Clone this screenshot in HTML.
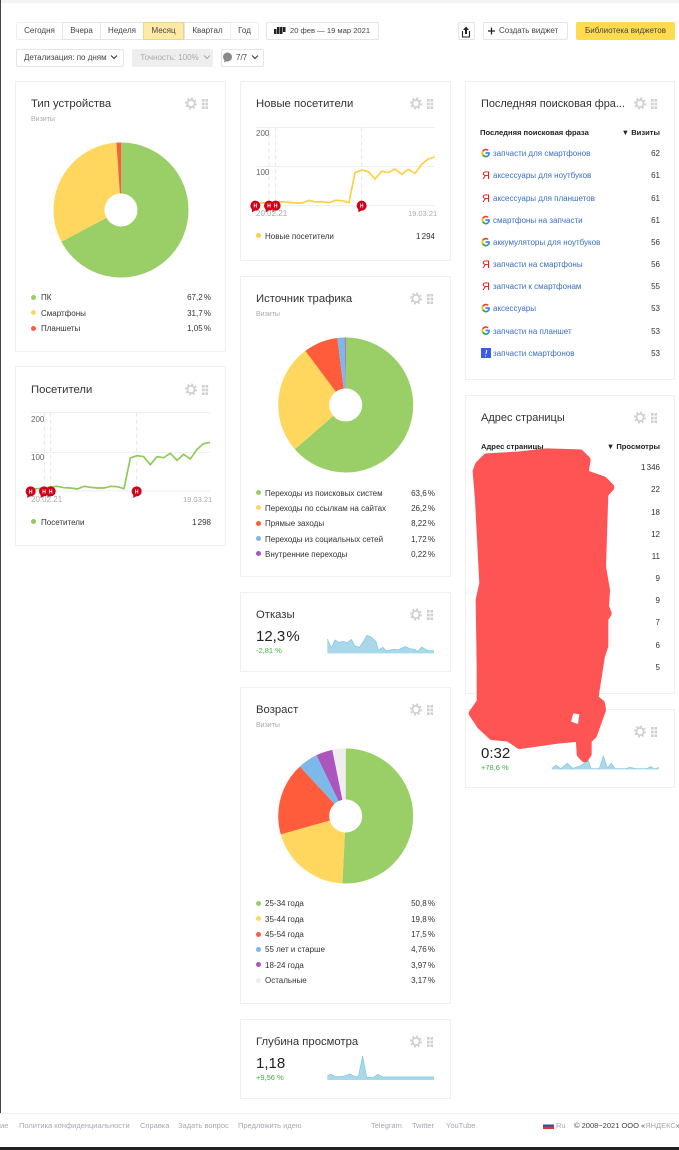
<!DOCTYPE html>
<html lang="ru"><head><meta charset="utf-8"><title>Метрика</title>
<style>
html,body{margin:0;padding:0;background:#fff}
body{position:relative;width:679px;height:1150px;overflow:hidden;font-family:"Liberation Sans",sans-serif;color:#333}
.a,.t,.r,.h,.s,.b{position:absolute;white-space:nowrap}
.t{font-size:8px;line-height:12px;color:#333;margin-top:1px}
.r{font-size:8px;line-height:12px;color:#333;text-align:right;width:60px;margin-top:1px;word-spacing:-1px}
.hd{font-size:7.6px;word-spacing:0}
.h{font-size:11.3px;line-height:16px;color:#333;margin-top:1px}
.s{font-size:7px;line-height:10px;color:#aaa;margin-top:1px}
.c{position:absolute;box-sizing:border-box;border:1px solid #f0f0f0;background:#fff}
.b{box-sizing:border-box;height:18px;border:1px solid #e5e5e5;border-radius:2px;font-size:8px;line-height:16px;text-align:center;color:#444;background:#fff}
.d{position:absolute;width:5px;height:5px;border-radius:50%}
.l{color:#3a6fc4}
.big{font-size:15px;line-height:20px;color:#222;position:absolute;white-space:nowrap;margin-top:1px;word-spacing:-3px}
.g{font-size:7.5px;line-height:10px;color:#3fae49;position:absolute;white-space:nowrap}
svg{position:absolute;left:0;top:0;overflow:visible}
.f{position:absolute;font-size:7.5px;line-height:12px;color:#a3a8b8;white-space:nowrap;top:1120px}
</style></head><body>
<div class="a" style="left:0;top:0;width:679px;height:3px;background:#f5f3f1"></div>
<div class="a" style="left:0;top:0;width:1px;height:1113px;background:#444"></div>

<!-- top controls -->
<div class="b" style="left:16px;top:22px;width:47px;border-color:#efefef;border-radius:2px 0 0 2px">Сегодня</div>
<div class="b" style="left:62px;top:22px;width:39px;border-radius:0">Вчера</div>
<div class="b" style="left:100px;top:22px;width:44px;border-radius:0">Неделя</div>
<div class="b" style="left:143px;top:22px;width:41px;border-radius:0;background:#fee9a5;border-color:#e8d58f">Месяц</div>
<div class="b" style="left:184px;top:22px;width:47px;border-radius:0">Квартал</div>
<div class="b" style="left:230px;top:22px;width:29px;border-color:#efefef;border-radius:0 2px 2px 0">Год</div>
<div class="b" style="left:266px;top:22px;width:113px;padding-left:23px;text-align:left;font-size:7.6px">20 фев — 19 мар 2021</div>
<svg width="679" height="80"><g fill="#222"><rect x="274" y="29" width="2.500" height="5"/><rect x="277" y="27" width="2.500" height="7"/><rect x="280" y="27" width="2.500" height="7"/><rect x="283" y="27" width="2.500" height="5"/></g></svg>
<div class="b" style="left:458px;top:22px;width:17px"></div>
<svg width="679" height="80"><path d="M466 26.500l-3 3.500h2v4h2v-4h2z" fill="#222"/><path d="M463 31.500h-.5v5.500h7v-5.500h-.5" fill="none" stroke="#222" stroke-width="1.100"/></svg>
<div class="b" style="left:483px;top:22px;width:85px;padding-left:15px;text-align:left">Создать виджет</div>
<svg width="679" height="80"><path d="M488 31h7M491.500 27.500v7" stroke="#222" stroke-width="1.300" fill="none"/></svg>
<div class="b" style="left:576px;top:22px;width:99px;background:#ffdb4d;border-color:#ffdb4d">Библиотека виджетов</div>
<div class="b" style="left:16px;top:49px;width:108px;padding-left:7px;text-align:left">Детализация: по дням</div>
<div class="b" style="left:132px;top:49px;width:81px;background:#eee;border-color:#eee;color:#aaa;padding-right:6px">Точность: 100%</div>
<div class="b" style="left:221px;top:49px;width:43px;padding-left:14px;text-align:left">7/7</div>
<svg width="679" height="80"><path d="M111 55.500l3 3 3-3M252 55.500l3 3 3-3" fill="none" stroke="#333"/><path d="M204 55.500l3 3 3-3" fill="none" stroke="#aaa"/><circle cx="227.500" cy="57" r="4.500" fill="#888"/><path d="M224.500 60l-.5 2.500 3-1.500z" fill="#888"/></svg>

<!-- cards -->
<div class="c" style="left:15px;top:81px;width:211px;height:271px"></div>
<div class="c" style="left:15px;top:366px;width:211px;height:180px"></div>
<div class="c" style="left:240px;top:81px;width:211px;height:180px"></div>
<div class="c" style="left:240px;top:276px;width:211px;height:301px"></div>
<div class="c" style="left:240px;top:592px;width:211px;height:80px"></div>
<div class="c" style="left:240px;top:687px;width:211px;height:317px"></div>
<div class="c" style="left:240px;top:1019px;width:211px;height:80px"></div>
<div class="c" style="left:465px;top:81px;width:210px;height:299px"></div>
<div class="c" style="left:465px;top:395px;width:210px;height:299px"></div>
<div class="c" style="left:465px;top:709px;width:210px;height:79px"></div>

<!-- titles -->
<div class="h" style="left:31px;top:95px">Тип устройства</div><div class="s" style="left:31px;top:114px">Визиты</div>
<div class="h" style="left:31px;top:381px">Посетители</div>
<div class="h" style="left:256px;top:95px">Новые посетители</div>
<div class="h" style="left:256px;top:290px">Источник трафика</div><div class="s" style="left:256px;top:309px">Визиты</div>
<div class="h" style="left:256px;top:606px">Отказы</div>
<div class="h" style="left:256px;top:701px">Возраст</div><div class="s" style="left:256px;top:720px">Визиты</div>
<div class="h" style="left:256px;top:1033px">Глубина просмотра</div>
<div class="h" style="left:481px;top:95px;font-size:10.9px">Последняя поисковая фра...</div>
<div class="h" style="left:481px;top:409px;font-size:11px">Адрес страницы</div>

<!-- gear + grip -->
<svg width="679" height="1150"><defs><g id="i"><circle cx="6" cy="5.500" r="3.600" fill="none" stroke="#cfcfcf" stroke-width="1.700"/><circle cx="6" cy="5.500" r="5.200" fill="none" stroke="#cfcfcf" stroke-width="1.600" stroke-dasharray="2 2.080"/><g fill="#cfcfcf"><rect x="17" y="1" width="2.600" height="2.600"/><rect x="20.500" y="1" width="2.600" height="2.600"/><rect x="17" y="4.700" width="2.600" height="2.600"/><rect x="20.500" y="4.700" width="2.600" height="2.600"/><rect x="17" y="8.400" width="2.600" height="2.600"/><rect x="20.500" y="8.400" width="2.600" height="2.600"/></g></g></defs>
<use href="#i" x="185" y="98"/><use href="#i" x="185" y="384"/><use href="#i" x="410" y="98"/><use href="#i" x="410" y="293"/><use href="#i" x="410" y="609"/><use href="#i" x="410" y="704"/><use href="#i" x="410" y="1036"/><use href="#i" x="634" y="98"/><use href="#i" x="634" y="412"/><use href="#i" x="634" y="726"/>

<!-- pies -->
<g fill="none" stroke-width="51">
<g transform="rotate(-90 121 210)">
<circle cx="121" cy="210" r="42" pathLength="100" stroke="#99cf66" stroke-dasharray="67.2 100"/>
<circle cx="121" cy="210" r="42" pathLength="100" stroke="#ffd75e" stroke-dasharray="31.7 100" stroke-dashoffset="-67.2"/>
<circle cx="121" cy="210" r="42" pathLength="100" stroke="#ff5c3c" stroke-dasharray="1.1 100" stroke-dashoffset="-98.9"/>
</g>
<g transform="rotate(-90 345.700 405)">
<circle cx="345.700" cy="405" r="42" pathLength="100" stroke="#99cf66" stroke-dasharray="63.6 100"/>
<circle cx="345.700" cy="405" r="42" pathLength="100" stroke="#ffd75e" stroke-dasharray="26.2 100" stroke-dashoffset="-63.6"/>
<circle cx="345.700" cy="405" r="42" pathLength="100" stroke="#ff5c3c" stroke-dasharray="8.22 100" stroke-dashoffset="-89.8"/>
<circle cx="345.700" cy="405" r="42" pathLength="100" stroke="#7cb9ea" stroke-dasharray="1.72 100" stroke-dashoffset="-98.02"/>
<circle cx="345.700" cy="405" r="42" pathLength="100" stroke="#ab55bd" stroke-dasharray="0.26 100" stroke-dashoffset="-99.74"/>
</g>
<g transform="rotate(-90 345.700 816)">
<circle cx="345.700" cy="816" r="42" pathLength="100" stroke="#99cf66" stroke-dasharray="50.8 100"/>
<circle cx="345.700" cy="816" r="42" pathLength="100" stroke="#ffd75e" stroke-dasharray="19.8 100" stroke-dashoffset="-50.8"/>
<circle cx="345.700" cy="816" r="42" pathLength="100" stroke="#ff5c3c" stroke-dasharray="17.5 100" stroke-dashoffset="-70.6"/>
<circle cx="345.700" cy="816" r="42" pathLength="100" stroke="#7cb9ea" stroke-dasharray="4.76 100" stroke-dashoffset="-88.1"/>
<circle cx="345.700" cy="816" r="42" pathLength="100" stroke="#ab55bd" stroke-dasharray="3.97 100" stroke-dashoffset="-92.86"/>
<circle cx="345.700" cy="816" r="42" pathLength="100" stroke="#eeeeee" stroke-dasharray="3.17 100" stroke-dashoffset="-96.83"/>
</g>
</g>

<!-- new visitors chart -->
<g transform="translate(240 110) scale(.33333)">
<path d="M47 52H585M47 170H585M47 287H585" stroke="#eee" stroke-width="3" fill="none"/>
<path d="M87 52V287M107 52V287M365 52V287" stroke="#e6e6e6" stroke-width="3" stroke-dasharray="12 9" fill="none"/>
<path d="M47 282L67 279 87 277 107 275 127 275 147 277 167 279 187 279 207 271 227 276 247 275 267 278 287 271 307 272 327 278 345 188 365 180 385 185 405 207 425 184 445 188 465 177 485 193 505 178 525 190 545 163 565 147 584 141" stroke="#ffcf40" stroke-width="5" fill="none"/>
<g fill="#d0021b"><circle cx="46" cy="287" r="15"/><circle cx="87" cy="287" r="15"/><circle cx="107" cy="287" r="15"/><circle cx="365" cy="287" r="15"/><path d="M36 297l0 10 10-6zM77 297l0 10 10-6zM97 297l0 10 10-6zM355 297l0 10 10-6z"/></g>
</g>
<!-- visitors chart -->
<g transform="translate(10 400) scale(.33333)">
<path d="M62 38H600M62 157H600M62 273H600" stroke="#eee" stroke-width="3" fill="none"/>
<path d="M103 38V273M122 38V273M380 38V273" stroke="#e6e6e6" stroke-width="3" stroke-dasharray="12 9" fill="none"/>
<path d="M62 268L82 266 103 265 122 261 142 259 162 263 182 264 202 267 222 259 242 262 262 264 282 264 302 259 322 260 342 266 361 174 381 167 401 170 421 194 441 170 461 173 481 160 501 181 521 163 541 177 561 148 581 131 600 127" stroke="#8fca58" stroke-width="5" fill="none"/>
<g fill="#d0021b"><circle cx="62" cy="274" r="15"/><circle cx="102" cy="274" r="15"/><circle cx="122" cy="274" r="15"/><circle cx="380" cy="274" r="15"/><path d="M52 284l0 10 10-6zM92 284l0 10 10-6zM112 284l0 10 10-6zM370 284l0 10 10-6z"/></g>
</g>
<!-- sparklines -->
<g transform="translate(240 590) scale(.33333)"><path d="M262 190V147L274 173 285 150 297 157 310 154 322 158 334 148 345 168 358 172 370 155 381 136 395 142 408 155 415 180 428 172 440 183 458 178 475 179 496 170 510 176 525 178 532 185 545 171 560 180 570 182 582 182V190Z" fill="#a8d8ea"/><path d="M262 147L274 173 285 150 297 157 310 154 322 158 334 148 345 168 358 172 370 155 381 136 395 142 408 155 415 180 428 172 440 183 458 178 475 179 496 170 510 176 525 178 532 185 545 171 560 180 570 182 582 182" fill="none" stroke="#7fc6e0" stroke-width="2"/></g>
<g transform="translate(240 1020) scale(.33333)"><path d="M262 180V168L272 162 285 170 310 169 330 162 345 170 355 170 368 108 380 172 400 172 413 163 430 171 582 171V180Z" fill="#a8d8ea"/><path d="M262 168L272 162 285 170 310 169 330 162 345 170 355 170 368 108 380 172 400 172 413 163 430 171 582 171" fill="none" stroke="#7fc6e0" stroke-width="2"/></g>
<g transform="translate(460 400) scale(.33333)"><path d="M276 1108V1105L288 1095 302 1106 322 1090 338 1105 360 1098 385 1082 393 1106 418 1106 430 1068 442 1104 454 1090 465 1106 495 1106 510 1102 530 1106 560 1106 572 1100 585 1107 596 1102V1108Z" fill="#a8d8ea"/><path d="M276 1105L288 1095 302 1106 322 1090 338 1105 360 1098 385 1082 393 1106 418 1106 430 1068 442 1104 454 1090 465 1106 495 1106 510 1102 530 1106 560 1106 572 1100 585 1107 596 1102" fill="none" stroke="#7fc6e0" stroke-width="2"/></g>
<g fill="#fff" font-family="Liberation Sans" font-size="5" font-weight="bold" text-anchor="middle"><text x="255.300" y="207.500">Н</text><text x="269" y="207.500">Н</text><text x="275.700" y="207.500">Н</text><text x="361.700" y="207.500">Н</text><text x="30.700" y="493.300">Н</text><text x="44" y="493.300">Н</text><text x="50.700" y="493.300">Н</text><text x="136.700" y="493.300">Н</text></g>
</svg>

<!-- chart labels -->
<div class="t" style="left:256px;top:127px;color:#666">200</div><div class="t" style="left:256px;top:166px;color:#666">100</div>
<div class="t" style="left:256px;top:207px;color:#aaa">20.02.21</div><div class="t" style="left:408px;top:207px;color:#aaa;font-size:7.5px">19.03.21</div>
<div class="t" style="left:31px;top:413px;color:#666">200</div><div class="t" style="left:31px;top:451px;color:#666">100</div>
<div class="t" style="left:31px;top:493px;color:#aaa">20.02.21</div><div class="t" style="left:183px;top:493px;color:#aaa;font-size:7.5px">19.03.21</div>

<!-- legends -->
<div class="d" style="left:31px;top:295px;background:#99cf66"></div><div class="t" style="left:41px;top:291px">ПК</div><div class="r" style="left:151px;top:291px">67,2 %</div>
<div class="d" style="left:31px;top:310px;background:#ffd75e"></div><div class="t" style="left:41px;top:307px">Смартфоны</div><div class="r" style="left:151px;top:307px">31,7 %</div>
<div class="d" style="left:31px;top:326px;background:#ff5c3c"></div><div class="t" style="left:41px;top:322px">Планшеты</div><div class="r" style="left:151px;top:322px">1,05 %</div>
<div class="d" style="left:31px;top:519px;background:#8fca58"></div><div class="t" style="left:41px;top:516px">Посетители</div><div class="r" style="left:151px;top:516px">1 298</div>
<div class="d" style="left:256px;top:233px;background:#ffcf40"></div><div class="t" style="left:265px;top:230px">Новые посетители</div><div class="r" style="left:375px;top:230px">1 294</div>

<div class="d" style="left:256px;top:490px;background:#99cf66"></div><div class="t" style="left:265px;top:487px">Переходы из поисковых систем</div><div class="r" style="left:375px;top:487px">63,6 %</div>
<div class="d" style="left:256px;top:505px;background:#ffd75e"></div><div class="t" style="left:265px;top:502px">Переходы по ссылкам на сайтах</div><div class="r" style="left:375px;top:502px">26,2 %</div>
<div class="d" style="left:256px;top:521px;background:#ff5c3c"></div><div class="t" style="left:265px;top:517px">Прямые заходы</div><div class="r" style="left:375px;top:517px">8,22 %</div>
<div class="d" style="left:256px;top:536px;background:#7cb9ea"></div><div class="t" style="left:265px;top:533px">Переходы из социальных сетей</div><div class="r" style="left:375px;top:533px">1,72 %</div>
<div class="d" style="left:256px;top:551px;background:#ab55bd"></div><div class="t" style="left:265px;top:548px">Внутренние переходы</div><div class="r" style="left:375px;top:548px">0,22 %</div>

<div class="d" style="left:256px;top:901px;background:#99cf66"></div><div class="t" style="left:265px;top:897px">25-34 года</div><div class="r" style="left:375px;top:897px">50,8 %</div>
<div class="d" style="left:256px;top:916px;background:#ffd75e"></div><div class="t" style="left:265px;top:913px">35-44 года</div><div class="r" style="left:375px;top:913px">19,8 %</div>
<div class="d" style="left:256px;top:932px;background:#ff5c3c"></div><div class="t" style="left:265px;top:928px">45-54 года</div><div class="r" style="left:375px;top:928px">17,5 %</div>
<div class="d" style="left:256px;top:947px;background:#7cb9ea"></div><div class="t" style="left:265px;top:943px">55 лет и старше</div><div class="r" style="left:375px;top:943px">4,76 %</div>
<div class="d" style="left:256px;top:962px;background:#ab55bd"></div><div class="t" style="left:265px;top:959px">18-24 года</div><div class="r" style="left:375px;top:959px">3,97 %</div>
<div class="d" style="left:256px;top:978px;background:#eee"></div><div class="t" style="left:265px;top:974px">Остальные</div><div class="r" style="left:375px;top:974px">3,17 %</div>

<!-- metrics -->
<div class="big" style="left:256px;top:626px">12,3 %</div><div class="g" style="left:256px;top:646px">-2,81 %</div>
<div class="big" style="left:256px;top:1053px">1,18</div><div class="g" style="left:256px;top:1073px">+9,56 %</div>
<div class="big" style="left:481px;top:743px">0:32</div><div class="g" style="left:481px;top:763px">+78,6 %</div>

<!-- table 1 -->
<div class="t hd" style="left:480px;top:126px;font-weight:bold;color:#222">Последняя поисковая фраза</div><div class="r hd" style="left:600px;top:126px;font-weight:bold;color:#222">▼ Визиты</div>
<svg width="679" height="1150"><defs><g id="G" fill="none" stroke-width="1.700"><path d="M7 1.800A3.500 3.500 0 0 0 1.800 2.800" stroke="#ea4335"/><path d="M1.800 2.800A3.500 3.500 0 0 0 1.800 6.200" stroke="#fbbc05"/><path d="M1.800 6.200A3.500 3.500 0 0 0 7 7.400" stroke="#34a853"/><path d="M7 7.400A3.500 3.500 0 0 0 8 4.500H4.500" stroke="#4285f4"/></g></defs>
<use href="#G" x="481" y="148.500"/><use href="#G" x="481" y="215.500"/><use href="#G" x="481" y="237.500"/><use href="#G" x="481" y="303.500"/><use href="#G" x="481" y="326"/>
<rect x="481" y="348" width="10" height="10" fill="#3b5bf0"/><path d="M486.700 350l-.8 4M485.600 355.500v1" stroke="#fff" stroke-width="1" fill="none"/></svg>
<div class="t" style="left:482px;top:169px;color:#f01a0a;font-size:11px">Я</div><div class="t" style="left:482px;top:192px;color:#f01a0a;font-size:11px">Я</div><div class="t" style="left:482px;top:258px;color:#f01a0a;font-size:11px">Я</div><div class="t" style="left:482px;top:280px;color:#f01a0a;font-size:11px">Я</div>
<div class="t l" style="left:493px;top:147px">запчасти для смартфонов</div><div class="r" style="left:600px;top:147px">62</div>
<div class="t l" style="left:493px;top:169px">аксессуары для ноутбуков</div><div class="r" style="left:600px;top:169px">61</div>
<div class="t l" style="left:493px;top:192px">аксессуары для планшетов</div><div class="r" style="left:600px;top:192px">61</div>
<div class="t l" style="left:493px;top:214px">смартфоны на запчасти</div><div class="r" style="left:600px;top:214px">61</div>
<div class="t l" style="left:493px;top:236px">аккумуляторы для ноутбуков</div><div class="r" style="left:600px;top:236px">56</div>
<div class="t l" style="left:493px;top:258px">запчасти на смартфоны</div><div class="r" style="left:600px;top:258px">56</div>
<div class="t l" style="left:493px;top:280px">запчасти к смартфонам</div><div class="r" style="left:600px;top:280px">55</div>
<div class="t l" style="left:493px;top:302px">аксессуары</div><div class="r" style="left:600px;top:302px">53</div>
<div class="t l" style="left:493px;top:325px">запчасти на планшет</div><div class="r" style="left:600px;top:325px">53</div>
<div class="t l" style="left:493px;top:347px">запчасти смартфонов</div><div class="r" style="left:600px;top:347px">53</div>

<!-- table 2 -->
<div class="t hd" style="left:481px;top:440px;font-weight:bold;color:#222">Адрес страницы</div><div class="r hd" style="left:600px;top:440px;font-weight:bold;color:#222">▼ Просмотры</div>
<div class="r" style="left:600px;top:461px">1 346</div><div class="r" style="left:600px;top:483px">22</div><div class="r" style="left:600px;top:506px">18</div><div class="r" style="left:600px;top:528px">12</div><div class="r" style="left:600px;top:550px">11</div><div class="r" style="left:600px;top:572px">9</div><div class="r" style="left:600px;top:594px">9</div><div class="r" style="left:600px;top:616px">7</div><div class="r" style="left:600px;top:639px">6</div><div class="r" style="left:600px;top:661px">5</div>

<!-- scribble -->
<svg width="679" height="1150"><g transform="translate(460 400) scale(.33333)"><path fill="#fe5454" stroke="#fe5454" stroke-width="24" stroke-linejoin="round" d="M57 195L80 172 170 167 260 157 360 160 380 180 373 221 430 241 451 262 433 282 426 500 438 570 435 620 443 640 433 656 433 738 423 768 403 895 423 911 426 930 399 1005 383 1020 383 1062 374 1075 362 1062 359 1013 300 1018 179 1035 146 1013 96 1008 62 976 38 940 62 906 62 800 59 600 70 550 57 300 50 214Z"/><path fill="#fff" d="M340 940L358 943 354 972 333 965Z"/></g></svg>

<!-- footer -->
<div class="a" style="left:0;top:1113px;width:679px;height:1px;background:#eee"></div>
<div class="f" style="left:0">ие</div>
<div class="f" style="left:19px">Политика конфиденциальности</div>
<div class="f" style="left:140px">Справка</div>
<div class="f" style="left:178px">Задать вопрос</div>
<div class="f" style="left:238px">Предложить идею</div>
<div class="f" style="left:371px">Telegram</div>
<div class="f" style="left:412px">Twitter</div>
<div class="f" style="left:446px">YouTube</div>
<div class="a" style="left:543px;top:1122px;width:11px;height:7px;background:linear-gradient(#fff 0 33%,#2f4fa8 33% 66%,#e5322d 66%)"></div>
<div class="f" style="left:556px">Ru</div>
<div class="f" style="left:574px;color:#444">© 2008−2021 ООО «<span style="color:#a3a8b8">ЯНДЕКС</span>»</div>
<div class="a" style="left:0;top:1147px;width:679px;height:3px;background:#222"></div>
</body></html>
